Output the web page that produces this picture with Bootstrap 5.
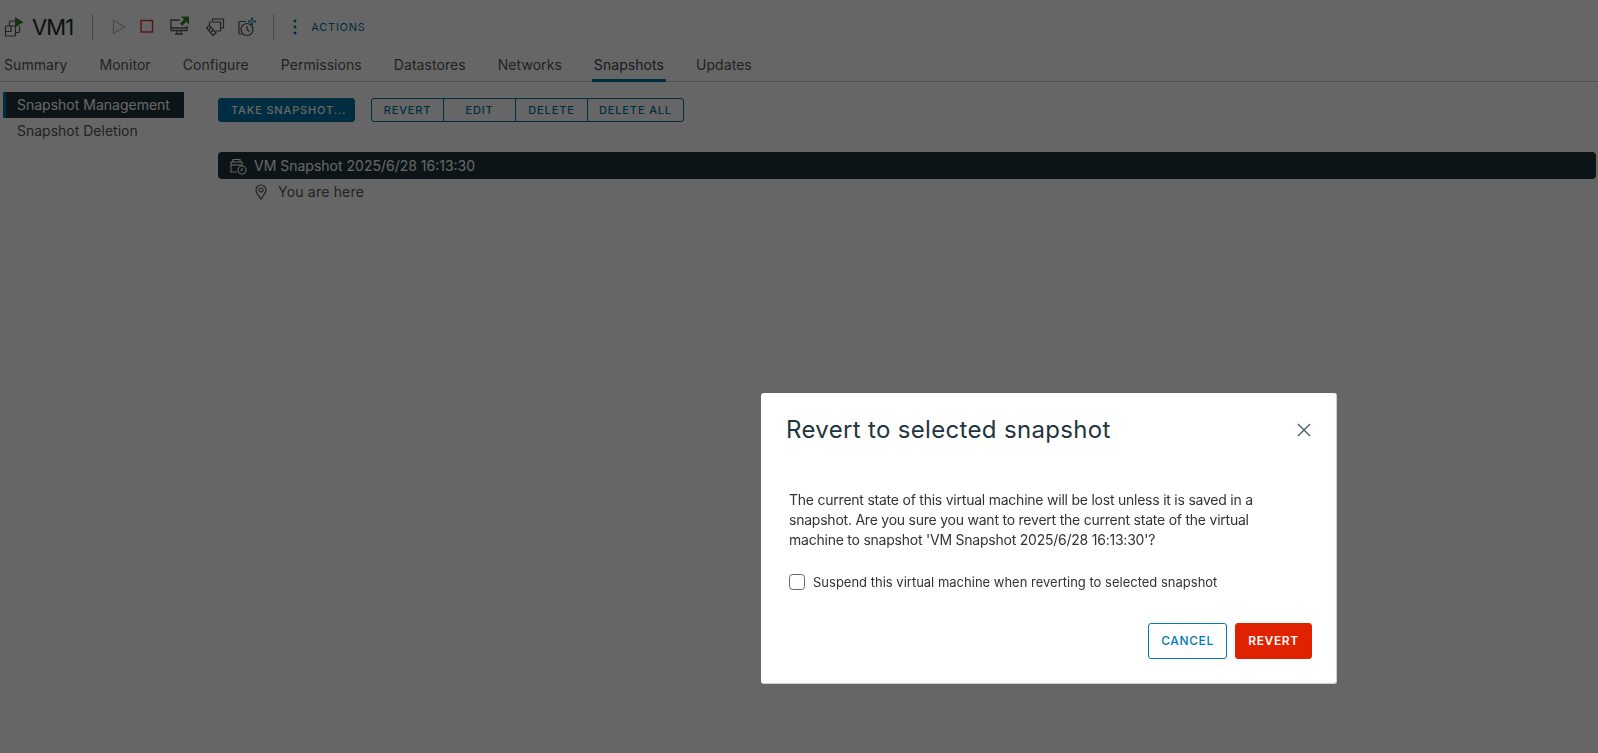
<!DOCTYPE html>
<html lang="en">
<head>
<meta charset="utf-8">
<title>VM1 - Snapshots</title>
<link href="https://cdn.jsdelivr.net/npm/bootstrap@5.3.0/dist/css/bootstrap.min.css" rel="stylesheet">
<style>
html,body{height:100%;}
body{font-family:Inter,"Liberation Sans",sans-serif;color:#1b2a32;background:#fff;overflow:hidden;font-size:14px;}
.objbar{height:54px;padding-left:4px;}
.vmname{font-size:22px;font-weight:400;margin:0 0 0 8px;line-height:1;color:#1b2a32;letter-spacing:-.9px;}
.vsep{width:1px;height:26px;background:#b3b3b3;flex:none;}
.sep-a{margin-left:19px;}
.sep-b{margin-left:16px;}
.tool{width:20px;height:20px;display:block;flex:none;}
.tool-wide{width:22px;height:22px;}
.t-play{margin-left:16px;}
.t-stop{margin-left:8px;}
.t-mon{margin-left:11px;}
.t-stack{margin-left:15px;}
.t-snap{margin-left:12px;}
.t-dots{margin-left:19px;}
.actlabel{font-size:11px;font-weight:400;letter-spacing:.75px;color:#0072a3;margin-left:14px;}
.tabline{border-bottom:1px solid #ccc;height:28px;padding-left:4px;gap:32px;}
.tabitem{color:#565656;height:28px;padding:1px 2px 0;margin:0 -2px;font-size:14px;line-height:20px;text-decoration:none;border-bottom:3px solid transparent;letter-spacing:.06px;}
.tabitem.on{border-bottom-color:#0072a3;color:#454545;}
.sidenav{width:184px;padding:10px 0 0 3px;flex:none;}
.sideitem{display:block;height:26px;line-height:26px;padding-left:14px;color:#565656;text-decoration:none;font-size:14px;}
.sideitem.on{background:#1e343e;color:#fff;border-left:3px solid #0072a3;padding-left:11px;letter-spacing:0;}
.mainpane{padding:16px 2px 0 34px;}
.toprow{gap:16px;}
.vbtn{height:24px;line-height:22px;padding:0 12px;font-size:11px;font-weight:500;letter-spacing:.85px;border-radius:3px;white-space:nowrap;}
.vbtn-solid{background:#0072a3;border:1px solid #0072a3;color:#fff;width:137px;}
.vbtn-line{background:#fff;border:1px solid #0072a3;color:#0072a3;width:73px;padding:0;}
.vbtn-all{width:97px;}
.snaprow{background:#1e343e;color:#fff;height:27px;border-radius:4px;margin-top:30px;padding-left:11px;font-size:14px;}
.snaptext{margin-left:7px;}
.hererow{color:#565656;height:25px;padding-left:36px;font-size:14px;letter-spacing:.2px;}
.heretext{margin-left:10px;}
.modal-backdrop.dim{opacity:.6;}
.revbox{position:fixed;left:761px;top:393px;width:576px;height:291px;z-index:1060;background:#fff;border:0;border-radius:3px;border-bottom:1px solid #c9d2d6;border-right:1px solid #c9d2d6;padding:0;}
.revhead{padding:19px 24px 0 25px;}
.revtitle{font-size:24px;font-weight:400;line-height:36px;margin:0;color:#1f3540;letter-spacing:.33px;}
.revx{background:none;border:0;padding:0;width:16px;height:16px;display:block;margin-top:10px;}
.revx svg{display:block;}
.revbody{padding:42px 28px 0;font-size:14px;line-height:20px;color:#333;letter-spacing:-.23px;}
.revbody p{margin:0;padding-right:45px;}
.revrow{margin-top:22px;}
.revcheck{width:16px;height:16px;margin:0;border:1px solid #666;border-radius:3px;flex:none;}
.revlabel{font-size:13px;color:#333;margin-left:8px;letter-spacing:0;}
.revfoot{position:absolute;right:24px;bottom:24px;gap:8px;}
.mbtn{height:36px;font-size:12px;letter-spacing:.6px;border-radius:3px;padding:0;line-height:34px;}
.mbtn-cancel{width:79px;background:#fff;border:1px solid #0079b8;color:#0079b8;font-weight:500;}
.mbtn-revert{width:77px;background:#e12200;border:1px solid #e12200;color:#fff;font-weight:600;}
</style>
</head>
<body>
<div class="d-flex flex-column h-100">
  <header class="objbar d-flex align-items-center">
    <svg class="tool" viewBox="0 0 20 20" fill="none" stroke="#555" stroke-width="1.2"><path d="M5.500 9V5a1 1 0 0 1 1-1h4.500M15.500 9v5.500a1 1 0 0 1-1 1H11"/><rect x="1.500" y="9" width="10" height="10" rx="1"/><path d="M1.500 14.500h5.500V9"/><path d="M11 0v10.500l8.500-5.200z" fill="#2f8a1e" stroke="none"/></svg>
    <h1 class="vmname">VM1</h1>
    <span class="vsep sep-a"></span>
    <svg class="tool t-play" viewBox="0 0 20 20" fill="none" stroke="#b5b9b5" stroke-width="1.2"><path d="M4.500 3.500v13L15.500 10z"/></svg>
    <svg class="tool t-stop" viewBox="0 0 20 20" fill="none" stroke="#d4332a" stroke-width="1.400"><rect x="4" y="3.500" width="11.500" height="11.500"/></svg>
    <svg class="tool tool-wide t-mon" viewBox="0 0 22 22" fill="none" stroke="#555" stroke-width="1.300"><path d="M12 4H3v10.500h16V10"/><path d="M3 12h16M9 14.500v3M13 14.500v3M7 18h8" /><path d="M13 .5h8v8l-2.700-2.700-4 4-2.400-2.400 4-4z" fill="#2f8a1e" stroke="none"/></svg>
    <svg class="tool t-stack" viewBox="0 0 20 20" fill="none" stroke="#555" stroke-width="1.200"><path d="M7.500 4V2h11v9h-3"/><path d="M4.500 8V5h11v9h-5"/><path d="M1.500 11l3-2.500 6.500 7.500-3 2.500z"/><path d="M3.500 13l3-2.500M5.500 15.500l3-2.500"/></svg>
    <svg class="tool t-snap" viewBox="0 0 20 20" fill="none" stroke="#555" stroke-width="1.200"><path d="M9 4.500H3a1 1 0 0 0-1 1V16a1 1 0 0 0 1 1h2"/><circle cx="10" cy="12.500" r="6"/><path d="M10 9v3.500l2.500 2"/><path d="M15 .5v3M15 5.500v3M11 4.500h3M16 4.500h3" stroke="#1f8fc9" stroke-width="2"/></svg>
    <span class="vsep sep-b"></span>
    <svg class="t-dots" width="4" height="16" viewBox="0 0 4 16" fill="#0072a3"><circle cx="2" cy="2" r="1.500"/><circle cx="2" cy="8" r="1.500"/><circle cx="2" cy="14" r="1.500"/></svg>
    <span class="actlabel">ACTIONS</span>
  </header>
  <nav class="tabline d-flex">
    <a class="tabitem" href="#">Summary</a>
    <a class="tabitem" href="#">Monitor</a>
    <a class="tabitem" href="#">Configure</a>
    <a class="tabitem" href="#">Permissions</a>
    <a class="tabitem" href="#">Datastores</a>
    <a class="tabitem" href="#">Networks</a>
    <a class="tabitem on" href="#">Snapshots</a>
    <a class="tabitem" href="#">Updates</a>
  </nav>
  <div class="d-flex flex-grow-1">
    <aside class="sidenav">
      <a class="sideitem on" href="#">Snapshot Management</a>
      <a class="sideitem" href="#">Snapshot Deletion</a>
    </aside>
    <main class="mainpane flex-grow-1">
      <div class="toprow d-flex align-items-center">
        <button type="button" class="btn vbtn vbtn-solid">TAKE SNAPSHOT...</button>
        <div class="btn-group">
          <button type="button" class="btn vbtn vbtn-line">REVERT</button>
          <button type="button" class="btn vbtn vbtn-line">EDIT</button>
          <button type="button" class="btn vbtn vbtn-line">DELETE</button>
          <button type="button" class="btn vbtn vbtn-line vbtn-all">DELETE ALL</button>
        </div>
      </div>
      <div class="snaprow d-flex align-items-center">
        <svg width="18" height="18" viewBox="0 0 18 18" fill="none" stroke="#fff" stroke-width="1.100"><path d="M8 15H2V5h11v3"/><path d="M4 5V2.500h7V5"/><path d="M2 8h11"/><circle cx="13" cy="13" r="4"/><path d="M13 11v2l-1.500 1"/></svg>
        <span class="snaptext">VM Snapshot 2025/6/28 16:13:30</span>
      </div>
      <div class="hererow d-flex align-items-center">
        <svg width="14" height="16" viewBox="0 0 14 16" fill="none" stroke="#565656" stroke-width="1.200"><path d="M7 15C4 11 2 8.500 2 6a5 5 0 0 1 10 0c0 2.500-2 5-5 9z"/><circle cx="7" cy="6" r="2"/></svg>
        <span class="heretext">You are here</span>
      </div>
    </main>
  </div>
</div>
<div class="modal-backdrop dim"></div>
<div class="revbox modal-content" role="dialog">
  <div class="revhead d-flex align-items-start justify-content-between">
    <h2 class="revtitle">Revert to selected snapshot</h2>
    <button type="button" class="revx" aria-label="Close"><svg width="16" height="16" viewBox="0 0 16 16" stroke="#4a5a62" stroke-width="1.400"><path d="M2 2l12 12M14 2L2 14"/></svg></button>
  </div>
  <div class="revbody">
    <p>The current state of this virtual machine will be lost unless it is saved in a snapshot. Are you sure you want to revert the current state of the virtual machine to snapshot 'VM Snapshot 2025/6/28 16:13:30'?</p>
    <div class="revrow d-flex align-items-center">
      <input class="form-check-input revcheck" type="checkbox" id="susp">
      <label class="revlabel" for="susp">Suspend this virtual machine when reverting to selected snapshot</label>
    </div>
  </div>
  <div class="revfoot d-flex">
    <button type="button" class="btn mbtn mbtn-cancel">CANCEL</button>
    <button type="button" class="btn mbtn mbtn-revert">REVERT</button>
  </div>
</div>
<script src="https://cdn.jsdelivr.net/npm/bootstrap@5.3.0/dist/js/bootstrap.bundle.min.js"></script>
</body>
</html>
